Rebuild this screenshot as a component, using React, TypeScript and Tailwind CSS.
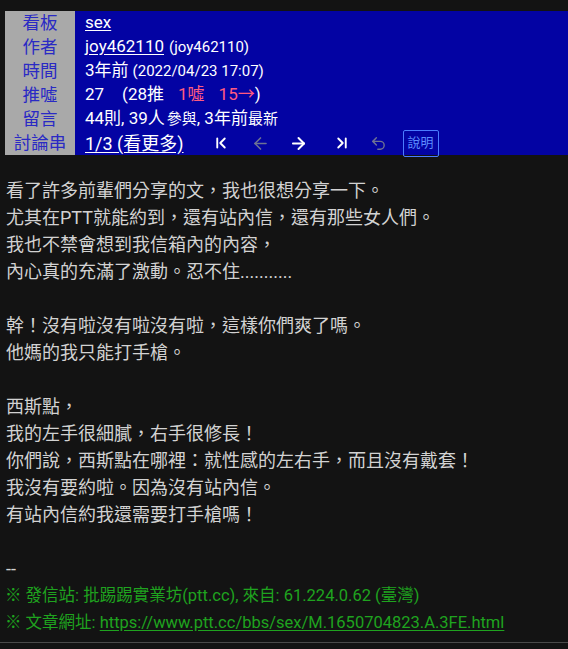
import { ChevronFirst, ChevronLast, ArrowLeft, ArrowRight, Undo2 } from "lucide-react";

const font = { fontFamily: 'Roboto, "Noto Sans CJK TC", sans-serif' };

const labels = ["看板", "作者", "時間", "推噓", "留言", "討論串"];

const bodyLines = [
  "看了許多前輩們分享的文，我也很想分享一下。",
  "尤其在PTT就能約到，還有站內信，還有那些女人們。",
  "我也不禁會想到我信箱內的內容，",
  "內心真的充滿了激動。忍不住...........",
  "",
  "幹！沒有啦沒有啦沒有啦，這樣你們爽了嗎。",
  "他媽的我只能打手槍。",
  "",
  "西斯點，",
  "我的左手很細膩，右手很修長！",
  "你們說，西斯點在哪裡：就性感的左右手，而且沒有戴套！",
  "我沒有要約啦。因為沒有站內信。",
  "有站內信約我還需要打手槍嗎！",
  "",
];

const ArticleHeader = () => (
  <div className="ml-[5px] mt-[11px] flex">
    <div className="w-[70px] bg-[#a9a9a9] flex flex-col">
      {labels.map((l) => (
        <div key={l} className="h-[24px] flex items-center justify-center text-[17.5px] text-[#2a2ac4]">
          {l}
        </div>
      ))}
    </div>
    <div className="flex-1 bg-[#0303a3] pl-[10px] text-white flex flex-col">
      <div className="h-[24px] flex items-center text-[17px]">
        <span className="underline underline-offset-2">sex</span>
      </div>
      <div className="h-[24px] flex items-center text-[17px]">
        <span className="underline underline-offset-2">joy462110</span>
        <span className="ml-[5px] text-[15px]">(joy462110)</span>
      </div>
      <div className="h-[24px] flex items-center text-[17px]">
        <span>3年前</span>
        <span className="ml-[4px] text-[15px]">(2022/04/23 17:07)</span>
      </div>
      <div className="h-[24px] flex items-center text-[17px]">
        <span>27</span>
        <span className="ml-[18px]">(28推</span>
        <span className="ml-[14px] text-[#ff5a80]">1噓</span>
        <span className="ml-[14px] text-[#ff5a80]">15→</span>
        <span>)</span>
      </div>
      <div className="h-[24px] flex items-center text-[17px]">
        <span>44則, 39人</span>
        <span className="ml-[2px] text-[15px]">參與</span>
        <span>, 3年前</span>
        <span className="text-[15px]">最新</span>
      </div>
      <div className="h-[24px] flex items-center text-[18px]">
        <span className="underline underline-offset-2">1/3 (看更多)</span>
        <ChevronFirst size={18} strokeWidth={2.5} className="ml-[28px] text-white" />
        <ArrowLeft size={19} strokeWidth={2} className="ml-[21px] text-[#6e7293]" />
        <ArrowRight size={19} strokeWidth={2.5} className="ml-[19px] text-white" />
        <ChevronLast size={18} strokeWidth={2.5} className="ml-[25px] text-white" />
        <Undo2 size={17} strokeWidth={2} className="ml-[19px] text-[#6e7293]" />
        <span className="ml-[16px] h-[27px] px-[4px] flex items-center rounded-[2px] border border-[#4a7cff] text-[13px] text-[#5b8dff]">
          說明
        </span>
      </div>
    </div>
  </div>
);

export default function App() {
  return (
    <div className="min-h-[649px] bg-[#131313] overflow-hidden" style={font}>
      <ArticleHeader />
      <div className="mt-[22px] pl-[6px] text-[18px] leading-[27px] text-[#d2d2d2]">
        {bodyLines.map((line, i) => (
          <div key={i} className="h-[27px] whitespace-pre">
            {line}
          </div>
        ))}
        <div className="h-[27px] text-[#d2d2d2]">--</div>
        <div className="h-[27px] text-[16.5px] text-[#1fa31f] -ml-[1px]">
          ※ 發信站: 批踢踢實業坊(ptt.cc), 來自: 61.224.0.62 (臺灣)
        </div>
        <div className="h-[27px] text-[16.5px] text-[#1fa31f] -ml-[1px]">
          ※ 文章網址:{" "}
          <span className="underline underline-offset-2">https://www.ptt.cc/bbs/sex/M.1650704823.A.3FE.html</span>
        </div>
      </div>
      <div className="mt-[6px] border-t border-[#4a4a4a] h-[10px]" />
    </div>
  );
}
